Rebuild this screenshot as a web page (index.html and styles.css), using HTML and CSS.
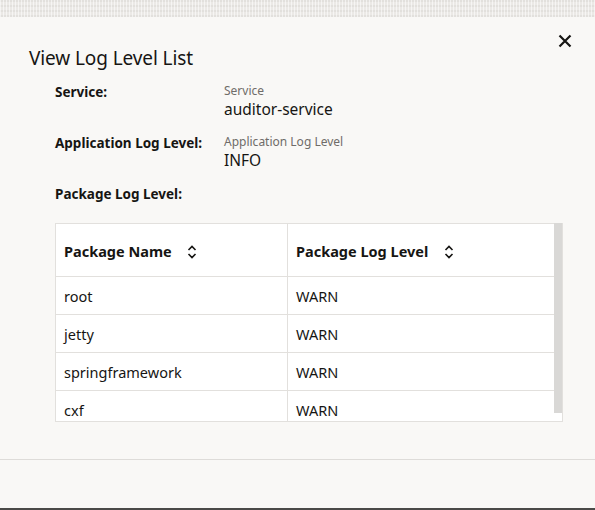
FILE: index.html
```html
<!DOCTYPE html>
<html lang="en">
<head>
    <meta charset="UTF-8">
    <meta name="viewport" content="width=device-width, initial-scale=1.0">
    <title>View Log Level List</title>
    <link rel="stylesheet" href="styles.css">
</head>
<body>
    <div class="backdrop"></div>
    <div class="dialog">
        <header class="dialog-header">
            <h1>View Log Level List</h1>
            <button class="close-btn" aria-label="Close">
                <svg width="14" height="14" viewBox="0 0 14 14">
                    <path d="M1.5 1.5 L12.5 12.5 M12.5 1.5 L1.5 12.5" stroke="#161513" stroke-width="2.2" fill="none"/>
                </svg>
            </button>
        </header>
        <div class="dialog-body">
            <div class="field">
                <div class="field-label">Service:</div>
                <div class="field-value">
                    <div class="sub-label">Service</div>
                    <div class="value">auditor-service</div>
                </div>
            </div>
            <div class="field">
                <div class="field-label">Application Log Level:</div>
                <div class="field-value">
                    <div class="sub-label">Application Log Level</div>
                    <div class="value">INFO</div>
                </div>
            </div>
            <div class="field">
                <div class="field-label">Package Log Level:</div>
            </div>

            <div class="table-wrap">
                <div class="table-scroll">
                    <table>
                        <thead>
                            <tr>
                                <th class="col-name">Package Name <span class="sort-icon"><svg width="10" height="14" viewBox="0 0 10 14"><path d="M1.5 5 L5 1.5 L8.5 5 M1.5 9 L5 12.5 L8.5 9" stroke="#161513" stroke-width="1.6" fill="none"/></svg></span></th>
                                <th>Package Log Level <span class="sort-icon"><svg width="10" height="14" viewBox="0 0 10 14"><path d="M1.5 5 L5 1.5 L8.5 5 M1.5 9 L5 12.5 L8.5 9" stroke="#161513" stroke-width="1.6" fill="none"/></svg></span></th>
                            </tr>
                        </thead>
                        <tbody>
                            <tr><td>root</td><td>WARN</td></tr>
                            <tr><td>jetty</td><td>WARN</td></tr>
                            <tr><td>springframework</td><td>WARN</td></tr>
                            <tr><td>cxf</td><td>WARN</td></tr>
                        </tbody>
                    </table>
                </div>
                <div class="scroll-thumb"></div>
            </div>
        </div>
        <footer class="dialog-footer"></footer>
    </div>
</body>
</html>
```

FILE: styles.css
```css
body {
    margin: 0;
    font-family: "Noto Sans", "Open Sans", sans-serif;
    color: #161513;
    background-color: #f9f8f6;
    height: 510px;
    overflow: hidden;
}
.backdrop {
    height: 17px;
    background-color: #ebe9e6;
    background-image:
        repeating-linear-gradient(90deg, rgba(255,255,255,0.55) 0 1px, transparent 1px 3px),
        repeating-linear-gradient(0deg, rgba(220,218,214,0.6) 0 2px, transparent 2px 5px);
}
.dialog {
    height: 493px;
    background-color: #f9f8f6;
    border-bottom: 2px solid #4a4a48;
    box-sizing: border-box;
    display: flex;
    flex-direction: column;
}
.dialog-header {
    display: flex;
    justify-content: space-between;
    align-items: flex-start;
    padding: 28px 22px 0 29px;
}
.dialog-header h1 {
    margin: 0;
    font-size: 19px;
    font-weight: 400;
    line-height: 26px;
    letter-spacing: -0.1px;
}
.close-btn {
    background: none;
    border: none;
    padding: 0;
    margin-top: -12px;
    width: 16px;
    height: 16px;
    display: flex;
    align-items: center;
    justify-content: center;
    cursor: pointer;
}
.dialog-body {
    padding: 12px 32px 0 55px;
    flex: 1;
}
.field {
    display: flex;
    margin-bottom: 15px;
}
.field-label {
    width: 169px;
    font-size: 13.5px;
    font-weight: 700;
    line-height: 18px;
}
.sub-label {
    font-size: 12px;
    color: #6f6c69;
    line-height: 16px;
}
.value {
    font-size: 15.5px;
    line-height: 20px;
}
.table-wrap {
    position: relative;
    margin-top: 20px;
    height: 199px;
    border: 1px solid #e2e0dd;
    box-sizing: border-box;
    background-color: #fff;
}
.table-scroll {
    height: 100%;
    overflow: hidden;
    margin-right: 8px;
}
.scroll-thumb {
    position: absolute;
    top: -1px;
    right: 0;
    width: 8px;
    height: 190px;
    background-color: #d9d8d6;
}
table {
    width: 100%;
    border-collapse: collapse;
    font-size: 14.5px;
}
th {
    text-align: left;
    font-weight: 700;
    height: 48px;
    padding: 4px 8px 0;
    border-bottom: 1px solid #e2e0dd;
}
td {
    height: 37px;
    padding: 0 8px;
    border-bottom: 1px solid #e2e0dd;
}
th.col-name, td:first-child {
    width: 215px;
    border-right: 1px solid #e2e0dd;
}
.sort-icon {
    display: inline-block;
    vertical-align: -2px;
    margin-left: 12px;
}
.dialog-footer {
    height: 48px;
    border-top: 1px solid #dedcd9;
}
```
